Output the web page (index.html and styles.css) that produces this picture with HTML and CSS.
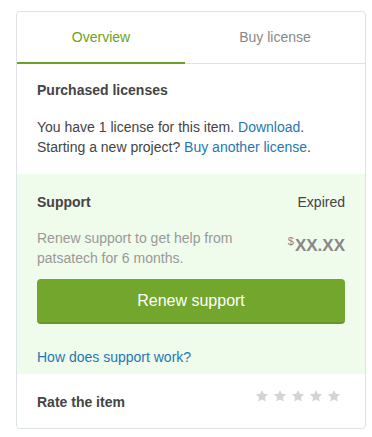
FILE: index.html
```html
<!DOCTYPE html>
<html lang="en">
<head>
	<meta charset="UTF-8">
	<title>Item</title>
	<link rel="stylesheet" href="styles.css">
</head>
<body>
	<div class="card">
		<div class="tabs">
			<div class="tab active">Overview</div>
			<div class="tab">Buy license</div>
		</div>
		<div class="licenses">
			<h3>Purchased licenses</h3>
			<p>You have 1 license for this item. <a href="#">Download</a>.<br>Starting a new project? <a href="#">Buy another license</a>.</p>
		</div>
		<div class="support">
			<div class="row">
				<h3>Support</h3>
				<span class="status">Expired</span>
			</div>
			<div class="row desc">
				<p>Renew support to get help from<br>patsatech for 6 months.</p>
				<div class="price"><sup>$</sup>XX.XX</div>
			</div>
			<button class="renew">Renew support</button>
			<a href="#" class="how">How does support work?</a>
		</div>
		<div class="rate">
			<h3>Rate the item</h3>
			<div class="stars">
				<svg viewBox="0 0 24 24"><polygon points="12,1.5 15.1,8.3 22.5,9.1 17,14.1 18.5,21.5 12,17.8 5.5,21.5 7,14.1 1.5,9.1 8.9,8.3"/></svg>
				<svg viewBox="0 0 24 24"><polygon points="12,1.5 15.1,8.3 22.5,9.1 17,14.1 18.5,21.5 12,17.8 5.5,21.5 7,14.1 1.5,9.1 8.9,8.3"/></svg>
				<svg viewBox="0 0 24 24"><polygon points="12,1.5 15.1,8.3 22.5,9.1 17,14.1 18.5,21.5 12,17.8 5.5,21.5 7,14.1 1.5,9.1 8.9,8.3"/></svg>
				<svg viewBox="0 0 24 24"><polygon points="12,1.5 15.1,8.3 22.5,9.1 17,14.1 18.5,21.5 12,17.8 5.5,21.5 7,14.1 1.5,9.1 8.9,8.3"/></svg>
				<svg viewBox="0 0 24 24"><polygon points="12,1.5 15.1,8.3 22.5,9.1 17,14.1 18.5,21.5 12,17.8 5.5,21.5 7,14.1 1.5,9.1 8.9,8.3"/></svg>
			</div>
		</div>
	</div>
</body>
</html>
```

FILE: styles.css
```css
*{
	margin: 0;
	padding: 0;
	box-sizing: border-box;
}
body{
	background-color: #fff;
	font-family: "Liberation Sans", Arial, sans-serif;
	font-size: 14px;
	line-height: 20px;
	color: #444;
	padding: 11px 0 0 16px;
}
a{
	color: #1f78b4;
	text-decoration: none;
}
h3{
	font-size: 14px;
	font-weight: bold;
	color: #444;
}
.card{
	width: 350px;
	height: 418px;
	border: 1px solid #dde3e6;
	border-radius: 4px;
	overflow: hidden;
}
.tabs{
	display: flex;
	height: 52px;
	border-bottom: 1px solid #dde3e6;
}
.tab{
	flex: 1;
	text-align: center;
	padding-top: 15px;
	color: #888;
}
.tab.active{
	flex: 0 0 168px;
	color: #6ba124;
	border-bottom: 2px solid #6ba124;
	margin-bottom: -1px;
}
.licenses{
	padding: 16px 20px 17px;
}
.licenses p{
	margin-top: 17px;
}
.support{
	background-color: #effbeb;
	padding: 18px 20px 7px;
}
.row{
	display: flex;
	justify-content: space-between;
}
.status{
	color: #444;
}
.desc{
	margin-top: 16px;
}
.desc p{
	color: #999;
}
.price{
	font-size: 17px;
	font-weight: bold;
	color: #888;
	line-height: 20px;
	padding-top: 3px;
}
.price sup{
	font-size: 11px;
	font-weight: normal;
	vertical-align: 6px;
	margin-right: 1px;
}
.renew{
	display: block;
	width: 100%;
	height: 45px;
	margin-top: 11px;
	background-color: #73a62c;
	border: none;
	border-bottom: 2px solid #67952a;
	border-radius: 4px;
	color: #fff;
	font-family: "Liberation Sans", Arial, sans-serif;
	font-size: 16px;
	cursor: pointer;
}
.how{
	display: block;
	margin-top: 23px;
}
.rate{
	display: flex;
	justify-content: space-between;
	padding: 18px 24px 15px 20px;
}
.stars{
	display: flex;
	gap: 4px;
	margin-top: -3px;
}
.stars svg{
	width: 14px;
	height: 14px;
	fill: #d4d4d4;
}
```
